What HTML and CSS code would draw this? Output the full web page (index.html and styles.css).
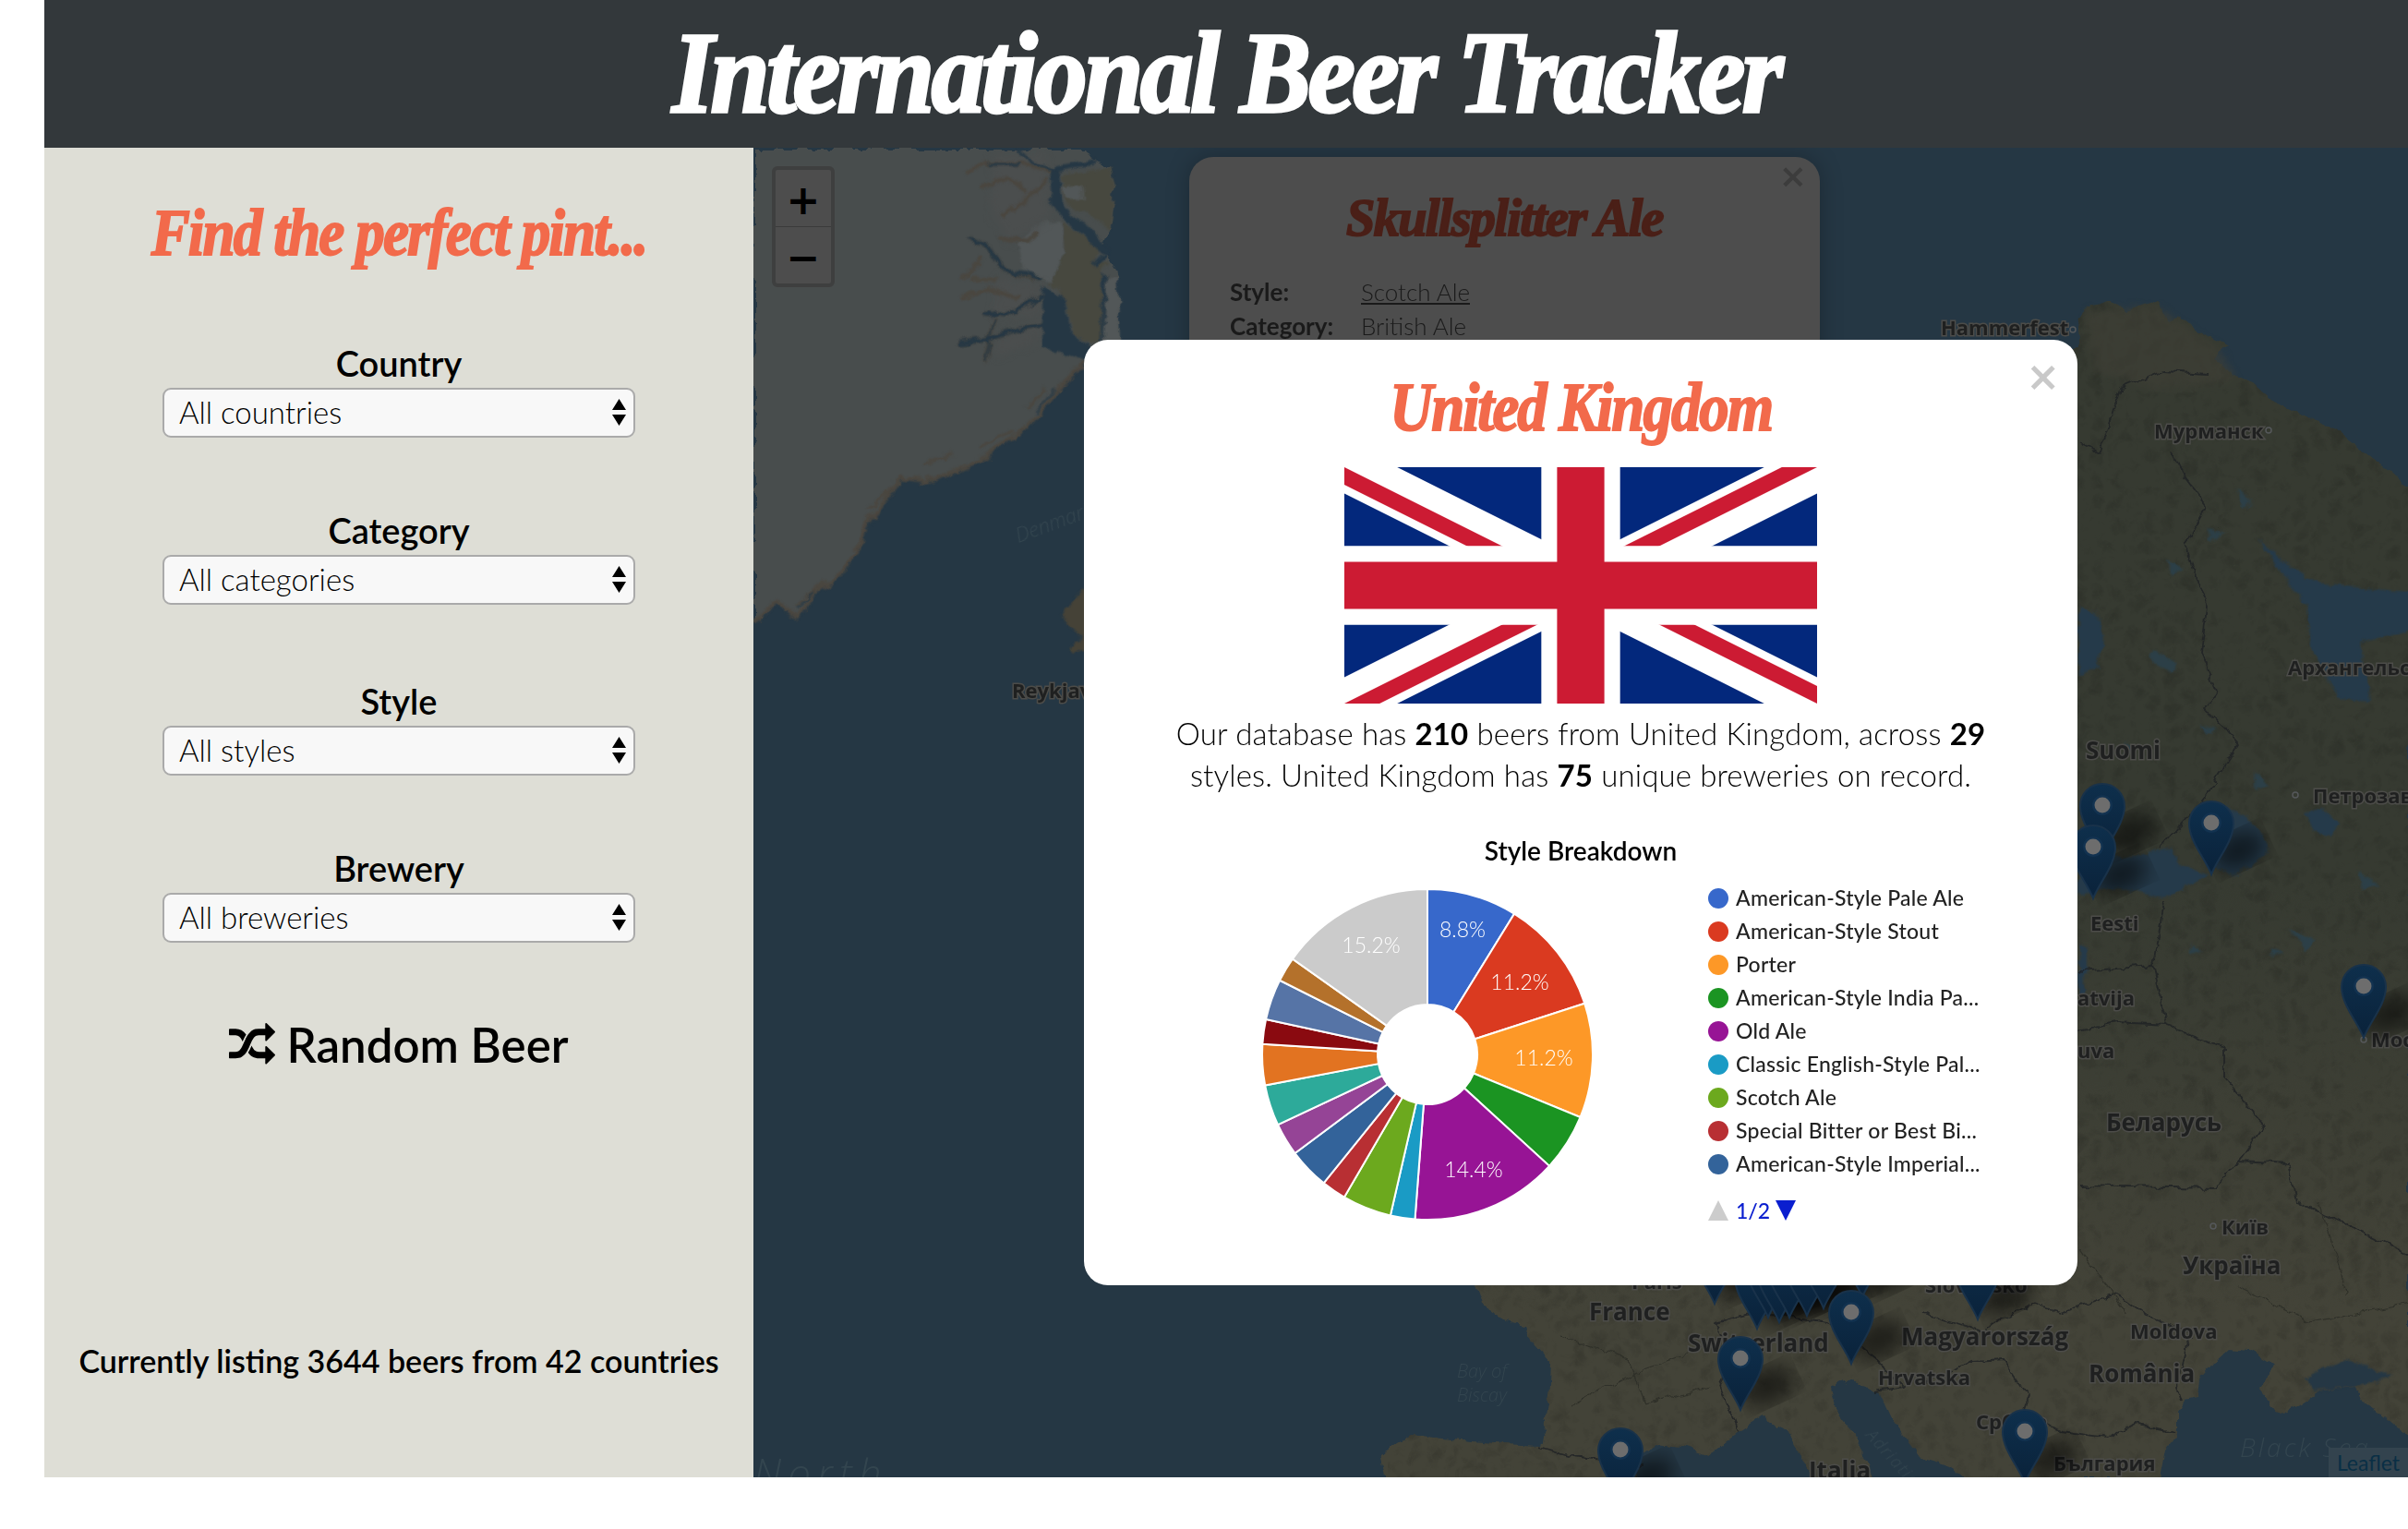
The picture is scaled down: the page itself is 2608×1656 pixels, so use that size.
FILE: index.html
```html
<!DOCTYPE html>
<html>
<head>
	<meta charset="utf-8">
	<title>International Beer Tracker</title>
	<link rel="stylesheet" href="styles.css">
</head>
<body>
	<div class="page">
		<header class="topbar">
			<h1 class="script site-title">International Beer Tracker</h1>
		</header>

		<div class="content">
			<aside class="sidebar">
				<h2 class="script side-title">Find the perfect pint...</h2>

				<div class="filters">
					<div class="filter">
						<label>Country</label>
						<div class="select"><span>All countries</span>
							<svg class="arrows" viewBox="0 0 15 29"><path d="M7.500 0L15 12H0zM0 17h15L7.500 29z"/></svg>
						</div>
					</div>
					<div class="filter">
						<label>Category</label>
						<div class="select"><span>All categories</span>
							<svg class="arrows" viewBox="0 0 15 29"><path d="M7.500 0L15 12H0zM0 17h15L7.500 29z"/></svg>
						</div>
					</div>
					<div class="filter filter-style">
						<label>Style</label>
						<div class="select"><span>All styles</span>
							<svg class="arrows" viewBox="0 0 15 29"><path d="M7.500 0L15 12H0zM0 17h15L7.500 29z"/></svg>
						</div>
					</div>
					<div class="filter">
						<label>Brewery</label>
						<div class="select"><span>All breweries</span>
							<svg class="arrows" viewBox="0 0 15 29"><path d="M7.500 0L15 12H0zM0 17h15L7.500 29z"/></svg>
						</div>
					</div>
				</div>

				<div class="random">
					<svg class="random-icon" viewBox="0 0 1792 1792"><path d="M666 481q-60 92-137 273-22-45-37-72.500t-40.500-63.500-51-56.500-63-35-81.500-14.500h-224q-14 0-23-9t-9-23v-192q0-14 9-23t23-9h224q250 0 410 225zm1126 799q0 14-9 23l-320 320q-9 9-23 9-13 0-22.500-9.500t-9.500-22.500v-192q-32 0-85 .5t-81 1-73-1-71-5-64-10.500-63-18.500-58-28.500-59-40-55-53.500-56-69q59-93 136-273 22 45 37 72.500t40.500 63.500 51 56.500 63 35 81.500 14.500h256v-192q0-14 9-23t23-9q12 0 24 10l319 319q9 9 9 23zm0-896q0 14-9 23l-320 320q-9 9-23 9-13 0-22.500-9.500t-9.500-22.500v-192h-256q-48 0-87 15t-69 45-51 61.500-45 77.500q-32 62-78 171-29 66-49.500 111t-54 105-64 100-74 83-90 68.500-106.500 42-128 16.500h-224q-14 0-23-9t-9-23v-192q0-14 9-23t23-9h224q48 0 87-15t69-45 51-61.500 45-77.500q32-62 78-171 29-66 49.500-111t54-105 64-100 74-83 90-68.500 106.500-42 128-16.500h256v-192q0-14 9-23t23-9q12 0 24 10l319 319q9 9 9 23z"/></svg>
					<span>Random Beer</span>
				</div>

				<p class="listing">Currently listing 3644 beers from 42 countries</p>
			</aside>

			<main class="map">
				<!-- map tiles, redrawn in page coordinates -->
				<svg class="tiles" viewBox="816 160 1792 1440">
					<defs>
						<filter id="soft" color-interpolation-filters="sRGB"><feGaussianBlur stdDeviation="1.2"/></filter>
						<filter id="softer" color-interpolation-filters="sRGB"><feGaussianBlur stdDeviation="4"/></filter>
						<filter id="shade" color-interpolation-filters="sRGB"><feGaussianBlur stdDeviation="11"/></filter>
						<!-- wobble the hand traced coasts and borders -->
						<filter id="rough" filterUnits="userSpaceOnUse" x="816" y="160" width="1792" height="1440" color-interpolation-filters="sRGB">
							<feTurbulence baseFrequency=".04" numOctaves="3" seed="4"/>
							<feDisplacementMap in="SourceGraphic" scale="9" xChannelSelector="R" yChannelSelector="G"/>
						</filter>
						<filter id="terrain" filterUnits="userSpaceOnUse" x="1500" y="320" width="1108" height="1280" color-interpolation-filters="sRGB">
							<feTurbulence baseFrequency=".05" numOctaves="4" seed="9"/>
							<feColorMatrix values="0 0 0 0 0  0 0 0 0 0  0 0 0 0 0  .24 0 0 0 -.06"/>
						</filter>
						<linearGradient id="pinfill" x1="0" y1="0" x2="0" y2="1">
							<stop offset="0" stop-color="#0e2f4c"/>
							<stop offset="1" stop-color="#0a223a"/>
						</linearGradient>
						<linearGradient id="landfill" gradientUnits="userSpaceOnUse" x1="0" y1="950" x2="0" y2="1420">
							<stop offset="0" stop-color="#363a31"/>
							<stop offset="1" stop-color="#434338"/>
						</linearGradient>
						<path id="land" d="M1700 1200L2250 368L2248 345L2258 330L2285 322L2300 335L2335 323L2345 345L2360 340L2385 360L2410 372L2395 385L2415 405L2440 415L2460 433L2526 462L2576 500L2608 530V1555L2580 1532L2557 1515L2547 1499L2510 1505L2490 1519L2467 1529L2443 1500L2463 1479L2433 1462L2410 1460L2397 1472L2380 1492L2378 1512L2363 1515L2357 1525L2357 1552L2343 1569L2337 1600H2130L2113 1589L2080 1579L2047 1535L2033 1505L2013 1499L2003 1490L1980 1502L1987 1525L2007 1552L2027 1600H1967L1950 1579L1933 1549L1907 1532L1880 1549L1847 1574L1820 1565L1793 1562L1777 1572L1767 1600H1498L1492 1573L1527 1552L1570 1557L1627 1562L1667 1564L1673 1532L1677 1499L1678 1475L1660 1455L1650 1435L1623 1425L1603 1412L1597 1392Z"/>
						<clipPath id="land-clip"><use href="#land"/></clipPath>
						<symbol id="pin" overflow="visible">
							<ellipse cx="30" cy="-26" rx="30" ry="19" transform="rotate(-25 30 -26)" fill="#000" opacity=".55" filter="url(#shade)"/>
							<path d="M0 0C-6-16-24-36-24-55a24 24 0 0 1 48 0C24-36 6-16 0 0z" fill="url(#pinfill)" stroke="#19324a" stroke-width="2"/>
							<circle cy="-56" r="11" fill="#123250"/>
							<circle cy="-56" r="8.500" fill="#6d6d6d"/>
						</symbol>
					</defs>

					<g filter="url(#rough)">
						<!-- Greenland -->
						<path fill="#484d4d" d="M816 160H1173L1182 173L1200 180L1205 203L1203 223L1200 247L1192 267L1203 280L1210 300L1213 368L1200 400L1173 390L1150 412L1117 455L1067 493L1033 508L1000 520L973 516L940 565L913 619L880 642L860 669L840 650L816 669Z"/>
						<path fill="#47483f" filter="url(#soft)" d="M1147 187L1200 180L1205 203L1203 223L1200 247L1180 233L1153 217ZM1150 237L1192 267L1182 287L1203 280L1192 293L1192 367L1180 370L1160 360L1152 328L1143 310L1133 307L1150 270Z"/>
						<path fill="#525758" filter="url(#soft)" d="M1197 300L1210 300L1213 368L1193 368ZM1120 240L1148 238L1150 270L1135 305L1105 290L1100 262ZM1147 200L1170 198L1172 215L1155 214Z"/>
						<path fill="#4b4e4e" filter="url(#softer)" d="M1075 165L1130 165L1135 235L1090 260L1070 220ZM1075 300L1125 305L1125 340L1075 340ZM1075 365L1125 345L1125 365L1080 385Z"/>
						<g fill="none" stroke="#4a463f" stroke-width="4.500" filter="url(#soft)" stroke-linecap="round" stroke-linejoin="round">
							<path d="M1045 185L1070 175L1100 175L1140 185M1060 200L1090 190L1110 205M1085 230L1110 215L1130 195M1080 255L1110 260L1120 250"/>
							<path d="M1060 280L1040 300M1050 300L1075 300M1040 320L1075 310M1070 310L1100 320M1075 345L1065 390M1050 257L1067 265L1077 280L1087 293L1123 300M1067 337L1085 340L1127 320M1040 370L1070 365L1100 355L1127 350"/>
							<path d="M1173 390L1150 412L1117 455L1067 493L1033 508L1000 520L973 516L940 565L913 619L880 642L860 669L840 650L816 669"/>
							<path d="M1095 465L1060 482M1000 500L1030 490M860 655L890 630M940 550L960 530M1130 420L1110 440" stroke-width="3"/>
						</g>
						<g fill="none" stroke="#253744" filter="url(#soft)" stroke-linecap="round" stroke-linejoin="round">
							<path stroke-width="11" d="M1140 187L1143 220L1180 253L1194 268"/>
							<path stroke-width="6" d="M1143 180L1180 175"/>
							<path stroke-width="3" d="M1103 160L1115 175L1140 183M1070 176L1100 176"/>
							<path stroke-width="4.500" d="M1050 257L1067 265L1077 280L1087 293L1110 295L1123 300M1067 337L1085 340L1127 320M1040 370L1070 365L1100 355L1127 350"/>
							<path stroke-width="2" d="M1075 345L1065 390M861 658L880 640M1120 445L1140 420"/>
						</g>
						<path fill="#253744" filter="url(#soft)" d="M1127 310L1150 320L1157 357L1180 373L1190 395L1173 390L1127 373L1127 327ZM1192 296L1197 296L1193 370L1191 370ZM1180 288L1195 272L1198 276L1186 292Z"/>

						<!-- Iceland -->
						<path fill="#454237" filter="url(#soft)" d="M1147 665L1173 635L1185 640L1185 700L1160 708L1158 702L1170 690Z"/>

						<!-- Scandinavia, Russia and the mainland down to the Black Sea -->
						<use href="#land" fill="url(#landfill)"/>
						<rect x="1500" y="320" width="1108" height="1280" filter="url(#terrain)" clip-path="url(#land-clip)"/>
						<path fill="#3f3f36" opacity=".6" filter="url(#softer)" d="M2258 335L2335 330L2400 375L2420 410L2340 420L2265 400Z"/>
						<path fill="#253744" filter="url(#soft)" d="M2590 1490L2540 1470L2495 1490L2505 1505L2547 1499Z"/>

						<!-- inland water -->
						<g fill="#253a4a" filter="url(#soft)">
							<path d="M2442 582L2481 614L2504 630L2608 639V681L2554 693L2566 757L2531 754L2500 700L2496 655L2473 623Z"/>
							<path d="M2250 655L2268 662L2279 690L2270 720L2250 731Z"/>
							<path d="M2250 920L2290 927L2323 922L2350 917L2357 933L2390 945L2375 955L2340 970L2293 960L2250 967Z"/>
							<path d="M2410 870L2430 883L2450 903L2453 920L2437 937L2413 947L2398 935L2402 900Z"/>
							<path d="M2250 1019L2258 1025L2258 1076L2250 1076Z"/>
							<path d="M2494 878L2512 872L2530 890L2520 905L2505 900Z"/>
						</g>
						<g fill="#2c3f47" filter="url(#soft)">
							<path d="M2330 700L2356 716L2350 726L2325 710ZM2300 800L2310 812L2296 817ZM2478 1002L2506 1018L2494 1028ZM2552 942L2578 958L2558 962ZM2370 1020L2384 1028L2370 1033ZM2458 1025L2470 1030L2458 1034ZM2390 570L2408 575L2395 583ZM2440 832L2454 848L2440 854ZM2380 782L2398 788L2385 794ZM2345 605L2365 615L2350 622ZM2420 525L2440 545L2425 548Z"/>
						</g>

						<!-- borders -->
						<g fill="none" stroke="#1e2124" stroke-width="1.800" stroke-linejoin="round" opacity=".8">
							<path d="M2351 489L2364 515L2388 547L2364 588L2388 655L2382 706L2399 748L2386 764L2423 805L2384 866L2337 917"/>
							<path d="M2250 477L2271 489L2295 419L2341 400L2388 403"/>
							<path d="M2341 974L2330 1044L2345 1108L2407 1133L2407 1165L2450 1216L2423 1255L2477 1258L2485 1299L2608 1357"/>
							<path d="M2250 1114L2290 1105L2345 1108M2250 1283L2399 1286L2423 1255M2250 1050L2330 1044"/>
							<path d="M2080 1420L2142 1440L2200 1411L2230 1420L2290 1400L2320 1420L2370 1440L2355 1500L2360 1515"/>
							<path d="M2080 1497L2135 1472L2168 1470L2195 1510L2190 1525L2230 1548L2280 1555L2310 1540L2355 1550"/>
							<path d="M1665 1565L1700 1575L1780 1585M1880 1549L1860 1500L1875 1470L1855 1430L1900 1420L1980 1430L2030 1470L2060 1500L2030 1505"/>
						</g>
						<g fill="none" stroke="#2f3029" stroke-width="1.200">
							<path d="M1690 1445L1760 1470L1780 1520L1850 1500M1700 1520L1780 1480L1840 1460M2420 1390L2500 1430L2608 1410M2510 1300L2540 1400M2250 1350L2300 1420"/>
						</g>
					</g>

					<!-- faint sea names -->
					<g class="sea">
						<text x="1103" y="588" transform="rotate(-20 1103 588)" font-size="22">Denmark Strait</text>
						<text x="1578" y="1492" font-size="20">Bay of</text>
						<text x="1578" y="1518" font-size="20">Biscay</text>
						<text x="816" y="1612" font-size="44" letter-spacing="7">North</text>
						<text x="2426" y="1578" font-size="28" letter-spacing="3">Black Sea</text>
						<text x="2020" y="1555" transform="rotate(48 2020 1555)" font-size="18" letter-spacing="2">Adriatic Sea</text>
					</g>

					<!-- place names -->
					<g class="place">
						<text x="2102" y="363">Hammerfest</text>
						<text x="2333" y="475">Мурманск</text>
						<text x="2478" y="731">Архангельск</text>
						<text x="2505" y="870">Петрозаводск</text>
						<text x="1096" y="756">Reykjavík</text>
						<text x="2264" y="1008">Eesti</text>
						<text x="2250" y="1089">atvija</text>
						<text x="2250" y="1146">uva</text>
						<text x="2406" y="1337">Київ</text>
						<text x="2568" y="1134">Москва</text>
						<text x="2307" y="1450">Moldova</text>
						<text x="2034" y="1500">Hrvatska</text>
						<text x="2140" y="1548">Србија</text>
						<text x="2224" y="1593">България</text>
						<text x="2085" y="1400">Slovensko</text>
						<text x="1767" y="1396">Paris</text>
					</g>
					<g class="place place-big">
						<text x="2259" y="822">Suomi</text>
						<text x="2281" y="1225">Беларусь</text>
						<text x="2364" y="1380">Україна</text>
						<text x="1721" y="1430">France</text>
						<text x="1828" y="1464">Switzerland</text>
						<text x="2059" y="1457">Magyarország</text>
						<text x="2262" y="1497">România</text>
						<text x="1959" y="1602">Italia</text>
					</g>
					<circle class="town" cx="2457" cy="466" r="3"/>
					<circle class="town" cx="2245" cy="357" r="3"/>
					<circle class="town" cx="2486" cy="861" r="3"/>
					<circle class="town" cx="2397" cy="1328" r="3"/>
					<circle class="town" cx="2560" cy="1126" r="3"/>

					<!-- markers -->
					<use href="#pin" x="1857" y="1412"/>
					<use href="#pin" x="1903" y="1439"/>
					<use href="#pin" x="1915" y="1427"/>
					<use href="#pin" x="1927" y="1432"/>
					<use href="#pin" x="1938" y="1427"/>
					<use href="#pin" x="1957" y="1425"/>
					<use href="#pin" x="1975" y="1417"/>
					<use href="#pin" x="2017" y="1405"/>
					<use href="#pin" x="2005" y="1477"/>
					<use href="#pin" x="1885" y="1527"/>
					<use href="#pin" x="2142" y="1429"/>
					<use href="#pin" x="1755" y="1626"/>
					<use href="#pin" x="2193" y="1606"/>
					<use href="#pin" x="2277" y="928"/>
					<use href="#pin" x="2267" y="973"/>
					<use href="#pin" x="2395" y="947"/>
					<use href="#pin" x="2560" y="1124"/>
				</svg>

				<div class="zoom-control">
					<a class="zoom-btn">+</a>
					<a class="zoom-btn">−</a>
				</div>

				<div class="attribution">Leaflet</div>

				<!-- popup left open behind the country modal -->
				<div class="beer-popup">
					<span class="popup-close">×</span>
					<h2 class="script beer-name">Skullsplitter Ale</h2>
					<dl class="beer-facts">
						<dt>Style:</dt><dd><u>Scotch Ale</u></dd>
						<dt>Category:</dt><dd>British Ale</dd>
					</dl>
				</div>

				<div class="modal">
					<span class="modal-close">×</span>
					<h2 class="script country-name">United Kingdom</h2>

					<svg class="flag" viewBox="0 0 60 30">
						<clipPath id="flag-t"><path d="M30 15h30v15zv15H0zH0V0zV0h30z"/></clipPath>
						<rect width="60" height="30" fill="#03287c"/>
						<path d="M0 0L60 30M60 0L0 30" stroke="#fff" stroke-width="6"/>
						<path d="M0 0L60 30M60 0L0 30" stroke="#cc1b33" stroke-width="4" clip-path="url(#flag-t)"/>
						<path d="M30 0v30M0 15h60" stroke="#fff" stroke-width="10"/>
						<path d="M30 0v30M0 15h60" stroke="#cc1b33" stroke-width="6"/>
					</svg>

					<p class="country-text">Our database has <b>210</b> beers from United Kingdom, across <b>29</b><br>styles. United Kingdom has <b>75</b> unique breweries on record.</p>

					<svg class="chart" viewBox="1272 900 880 460">
						<text class="chart-title" x="1712" y="932" text-anchor="middle">Style Breakdown</text>
						<g id="slices"></g>
						<g class="slice-label">
							<text x="1584" y="1015">8.8%</text>
							<text x="1646" y="1072">11.2%</text>
							<text x="1672" y="1154">11.2%</text>
							<text x="1596" y="1275">14.4%</text>
							<text x="1485" y="1032">15.2%</text>
						</g>
						<g class="legend">
							<circle cx="1861" cy="973" r="11" fill="#3768cb"/><text x="1880" y="981">American-Style Pale Ale</text>
							<circle cx="1861" cy="1009" r="11" fill="#da3a20"/><text x="1880" y="1017">American-Style Stout</text>
							<circle cx="1861" cy="1045" r="11" fill="#fd9827"/><text x="1880" y="1053">Porter</text>
							<circle cx="1861" cy="1081" r="11" fill="#1b9422"/><text x="1880" y="1089">American-Style India Pa...</text>
							<circle cx="1861" cy="1117" r="11" fill="#971495"/><text x="1880" y="1125">Old Ale</text>
							<circle cx="1861" cy="1153" r="11" fill="#1a9bc5"/><text x="1880" y="1161">Classic English-Style Pal...</text>
							<circle cx="1861" cy="1189" r="11" fill="#6ca91e"/><text x="1880" y="1197">Scotch Ale</text>
							<circle cx="1861" cy="1225" r="11" fill="#b82f33"/><text x="1880" y="1233">Special Bitter or Best Bi...</text>
							<circle cx="1861" cy="1261" r="11" fill="#33639a"/><text x="1880" y="1269">American-Style Imperial...</text>
						</g>
						<path d="M1861 1300L1872 1322H1850z" fill="#cccccc"/>
						<text class="pager" x="1880" y="1320">1/2</text>
						<path d="M1923 1300H1945L1934 1322z" fill="#0a1ecf"/>
					</svg>
				</div>
			</main>
		</div>
	</div>

	<script>
		// style counts out of the 125 beers in the sample, clockwise from the top
		var slices = [
			[11, '#3768cb'], [14, '#da3a20'], [14, '#fd9827'], [7, '#1b9422'],
			[18, '#971495'], [3, '#1a9bc5'], [6, '#6ca91e'], [3, '#b82f33'],
			[5, '#33639a'], [4, '#954496'], [5, '#2daa9a'], [5, '#e27321'],
			[3, '#8a0a10'], [5, '#5674a6'], [3, '#b4712b'], [19, '#cbcbcb']
		];
		var cx = 1546, cy = 1142, r = 179, hole = 54;
		var group = document.querySelector('#slices');
		var done = 0;

		function point(radius, angle) {
			return (cx + radius * Math.sin(angle)).toFixed(2) + ' ' + (cy - radius * Math.cos(angle)).toFixed(2);
		}

		slices.forEach(function(s) {
			var a0 = done / 125 * Math.PI * 2;
			done += s[0];
			var a1 = done / 125 * Math.PI * 2;
			var large = a1 - a0 > Math.PI ? 1 : 0;
			var path = document.createElementNS('http://www.w3.org/2000/svg', 'path');
			path.setAttribute('d', 'M' + point(hole, a0) + 'L' + point(r, a0) +
				'A' + r + ' ' + r + ' 0 ' + large + ' 1 ' + point(r, a1) +
				'L' + point(hole, a1) + 'A' + hole + ' ' + hole + ' 0 ' + large + ' 0 ' + point(hole, a0) + 'z');
			path.setAttribute('fill', s[1]);
			path.setAttribute('stroke', '#fff');
			path.setAttribute('stroke-width', '2');
			group.appendChild(path);
		});
	</script>
</body>
</html>
```

FILE: styles.css
```css
html, body {
	height: 100%;
}

body {
	margin: 0;
	padding: 0 0 56px 48px;
	box-sizing: border-box;
	background: #fff;
	color: #000;
	font-family: "Lato", "Noto Sans", sans-serif;
	overflow: hidden;
}

.page {
	display: flex;
	flex-direction: column;
	height: 1600px;
}

.script {
	margin: 0;
	font-family: "Liberation Serif", serif;
	font-weight: 700;
	font-style: italic;
	letter-spacing: -0.03em;
	-webkit-text-stroke: 2px currentColor;
}

.topbar {
	flex: none;
	display: flex;
	align-items: center;
	justify-content: center;
	height: 160px;
	background: #33383b;
}

.site-title {
	color: #fff;
	font-size: 124px;
	line-height: 160px;
	transform: scaleX(.93);
	-webkit-text-stroke-width: 3.5px;
}

.content {
	flex: 1;
	display: flex;
	min-height: 0;
}

/* sidebar */

.sidebar {
	flex: none;
	display: flex;
	flex-direction: column;
	align-items: center;
	width: 768px;
	box-sizing: border-box;
	padding-top: 40px;
	background: #deded6;
}

.side-title {
	color: #f26a4b;
	font-size: 72px;
	line-height: 104px;
	transform: scaleX(.877);
}

.filters {
	display: flex;
	flex-direction: column;
	gap: 79px;
	margin-top: 68px;
}

.filter {
	display: flex;
	flex-direction: column;
	align-items: center;
	width: 512px;
}

.filter-style {
	margin-top: 4px;
}

.filter label {
	font-size: 38px;
	font-weight: 600;
	line-height: 42px;
	margin-bottom: 6px;
}

.select {
	display: flex;
	align-items: center;
	justify-content: space-between;
	width: 100%;
	height: 54px;
	box-sizing: border-box;
	padding: 0 8px 2px 16px;
	border: 2.5px solid #aaa;
	border-radius: 9px;
	background: #f8f8f8;
	font-size: 33px;
	font-weight: 300;
}

.arrows {
	width: 15px;
	height: 29px;
}

.random {
	display: flex;
	align-items: center;
	gap: 12px;
	margin-top: 81px;
	font-size: 51px;
	font-weight: 600;
	line-height: 60px;
}

.random-icon {
	width: 50px;
	height: 50px;
}

.listing {
	margin: auto 0 105px;
	font-size: 34px;
	font-weight: 600;
	line-height: 42px;
}

/* map */

.map {
	flex: 1;
	position: relative;
	overflow: hidden;
	background: #253744;
}

.tiles {
	display: block;
	width: 100%;
	height: 100%;
}

.sea text {
	fill: #33454f;
	font-family: "Open Sans", sans-serif;
	font-style: italic;
	font-weight: 300;
}

.place text {
	fill: #1f2020;
	stroke: #4c4c49;
	stroke-width: 3px;
	paint-order: stroke;
	font-family: "Open Sans", sans-serif;
	font-size: 22px;
	font-weight: 700;
}

.place-big text {
	font-size: 26px;
}

.town {
	fill: none;
	stroke: #55585a;
	stroke-width: 1.5;
}

.zoom-control {
	position: absolute;
	left: 20px;
	top: 20px;
	display: flex;
	flex-direction: column;
	width: 60px;
	border: 4px solid #3e3f3f;
	border-radius: 6px;
	background: #4d4d4d;
}

.zoom-btn {
	display: block;
	height: 61px;
	color: #000;
	font-family: "DejaVu Sans", sans-serif;
	font-size: 44px;
	font-weight: 700;
	line-height: 66px;
	text-align: center;
}

.zoom-btn + .zoom-btn {
	border-top: 1px solid #3b3b3b;
}

.attribution {
	position: absolute;
	right: 0;
	bottom: 0;
	width: 86px;
	height: 32px;
	background: #33434e;
	color: #0a2f45;
	font-size: 23px;
	line-height: 32px;
	text-align: center;
}

.beer-popup {
	position: absolute;
	left: 472px;
	top: 10px;
	width: 683px;
	height: 400px;
	box-sizing: border-box;
	padding: 26px 44px;
	border-radius: 26px;
	background: #4d4d4d;
	box-shadow: 0 0 24px rgba(0, 0, 0, .25);
	color: #1a1a1a;
}

.popup-close {
	position: absolute;
	right: 14px;
	top: 0;
	color: #3c3c3c;
	font-family: "DejaVu Sans", sans-serif;
	font-size: 36px;
	font-weight: 700;
}

.beer-name {
	color: #4a1f17;
	font-size: 58px;
	line-height: 80px;
	text-align: center;
	transform: scaleX(.97);
}

.beer-facts {
	display: grid;
	grid-template-columns: 142px 1fr;
	row-gap: 0;
	margin: 22px 0 0;
	font-size: 26px;
	line-height: 37px;
}

.beer-facts dt {
	font-weight: 700;
}

.beer-facts dd {
	margin: 0;
	font-weight: 300;
}

.modal {
	position: absolute;
	left: 358px;
	top: 208px;
	display: flex;
	flex-direction: column;
	align-items: center;
	width: 1076px;
	height: 1024px;
	box-sizing: border-box;
	padding-top: 25px;
	border-radius: 26px;
	background: #fff;
}

.modal-close {
	position: absolute;
	right: 19px;
	top: 14px;
	color: #c9c9c9;
	font-family: "DejaVu Sans", sans-serif;
	font-size: 44px;
	font-weight: 700;
}

.country-name {
	color: #f26a4b;
	font-size: 74px;
	line-height: 96px;
	transform: scaleX(.876);
}

.flag {
	flex: none;
	width: 512px;
	height: 256px;
	margin-top: 17px;
}

.country-text {
	margin: 10px 0 0;
	font-size: 33px;
	font-weight: 300;
	letter-spacing: .13px;
	line-height: 45px;
	text-align: center;
}

.country-text b {
	font-weight: 700;
}

.chart {
	flex: none;
	width: 880px;
	height: 460px;
	margin-top: 38px;
}

.chart-title {
	font-size: 28px;
	font-weight: 600;
}

.slice-label text {
	fill: #fff;
	font-size: 23px;
	font-weight: 300;
	text-anchor: middle;
}

.legend text {
	fill: #222;
	font-size: 23px;
	font-weight: 500;
	letter-spacing: .25px;
}

.pager {
	fill: #0a1ecf;
	font-size: 23px;
	font-weight: 500;
}
```
